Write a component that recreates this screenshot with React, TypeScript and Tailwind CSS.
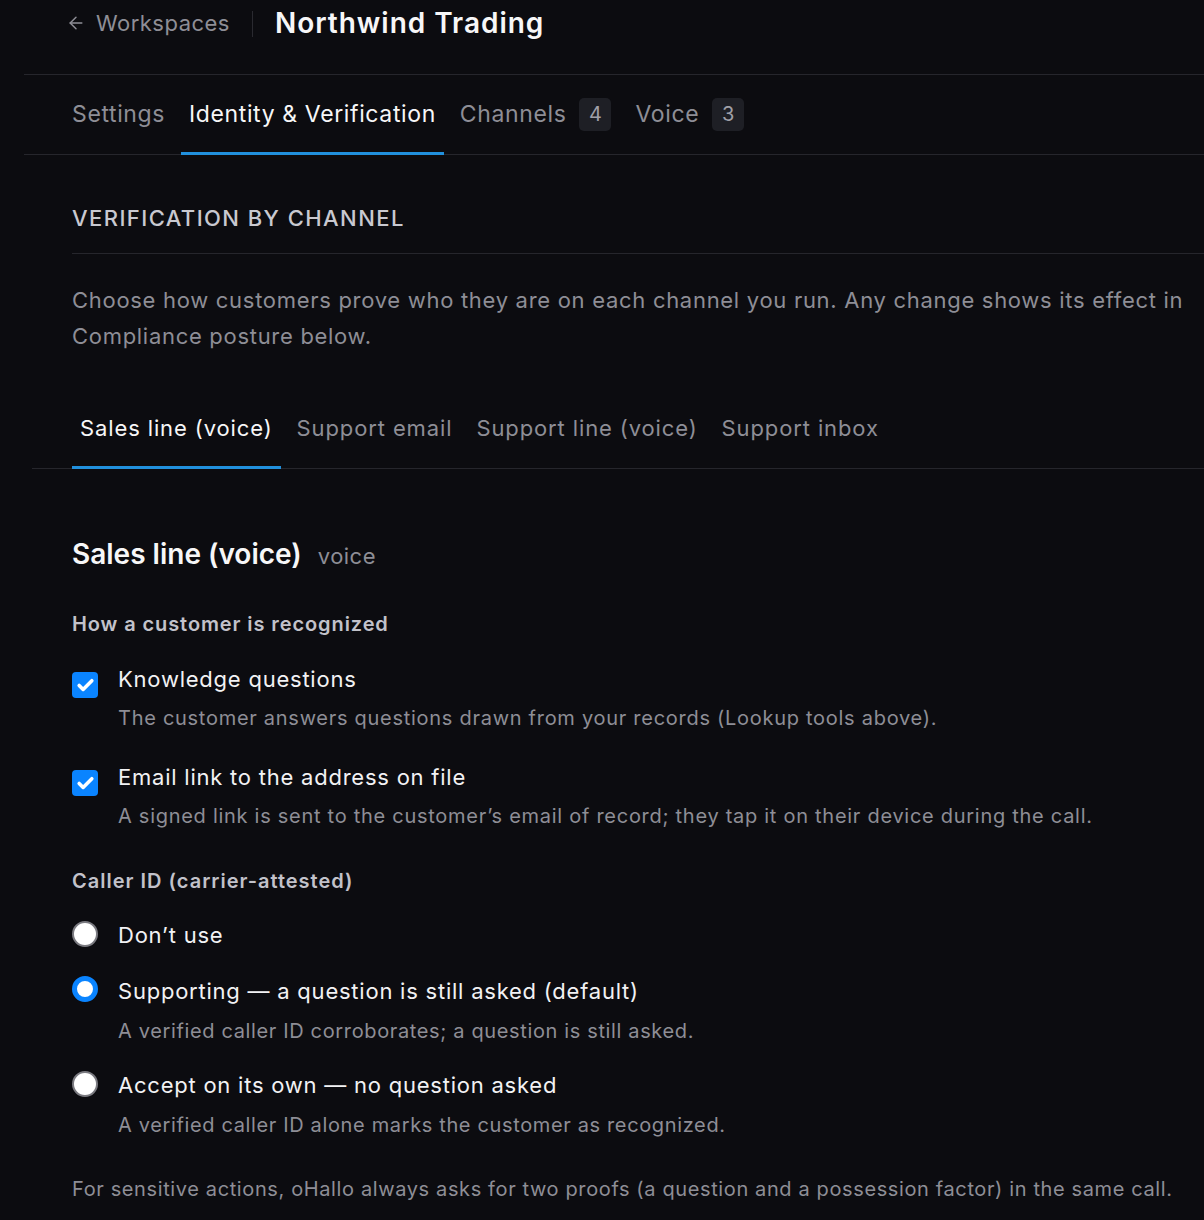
import { ArrowLeft, Check } from 'lucide-react'

const topTabs = [
  { label: 'Settings' },
  { label: 'Identity & Verification', active: true },
  { label: 'Channels', count: 4 },
  { label: 'Voice', count: 3 },
]

const channelTabs = ['Sales line (voice)', 'Support email', 'Support line (voice)', 'Support inbox']

function CheckBox() {
  return (
    <span className="mt-[9px] flex h-[26px] w-[26px] shrink-0 items-center justify-center rounded-[4px] bg-[#0a84ff]">
      <Check className="h-[19px] w-[19px] text-white" strokeWidth={4.5} />
    </span>
  )
}

function Radio({ on }: { on?: boolean }) {
  return on ? (
    <span className="mt-[1px] h-[26px] w-[26px] shrink-0 rounded-full border-[5px] border-[#0a84ff] bg-white" />
  ) : (
    <span className="mt-[2px] h-[26px] w-[26px] shrink-0 rounded-full border-2 border-[#7a7a80] bg-white" />
  )
}

function Option({ control, label, hint, first }: { control: React.ReactNode; label: string; hint?: string; first?: boolean }) {
  return (
    <div className={`flex gap-5 ${first ? 'mt-[25px]' : 'mt-[29px]'}`}>
      {control}
      <div>
        <div className="text-[22px] leading-[32px] tracking-[0.035em] text-[#f2f2f4]">{label}</div>
        {hint && <div className="mt-[9px] text-[20px] leading-[28px] tracking-[0.036em] text-[#8e8e96]">{hint}</div>}
      </div>
    </div>
  )
}

function RadioOption({ on, label, hint }: { on?: boolean; label: string; hint?: string }) {
  return (
    <div className="mt-[24px] flex gap-5">
      <Radio on={on} />
      <div>
        <div className="text-[22px] leading-[32px] tracking-[0.035em] text-[#f2f2f4]">{label}</div>
        {hint && <div className="mt-[10px] text-[20px] leading-[28px] tracking-[0.032em] text-[#8e8e96]">{hint}</div>}
      </div>
    </div>
  )
}

export default function App() {
  return (
    <div className="min-h-[1220px] overflow-hidden bg-[#0c0c10] pl-[24px] font-['Inter',sans-serif] tracking-[0.03em] text-white">
      {/* page header */}
      <header className="flex h-[75px] items-start border-b border-[#26262c] pl-[42px] pt-[5px]">
        <div className="flex h-[36px] items-center gap-[10px] text-[22px] text-[#8e8e96]">
          <ArrowLeft className="h-5 w-5" strokeWidth={1.75} />
          <span>Workspaces</span>
        </div>
        <div className="mx-[22px] mt-[6px] h-[26px] w-px bg-[#2a2a30]" />
        <h1 className="text-[28px] font-semibold leading-[36px] tracking-[0.035em] text-[#f7f7f8]">Northwind Trading</h1>
      </header>

      <nav className="flex h-[80px] gap-2 border-b border-[#26262c] pl-[40px]">
        {topTabs.map((t) => (
          <div
            key={t.label}
            className={`-mb-px flex items-center gap-[13px] border-b-[3px] px-2 pt-[1px] text-[23px] tracking-[0.027em] ${
              t.active ? 'border-[#2190dd] text-[#f7f7f8]' : 'border-transparent text-[#8e8e96]'
            }`}
          >
            {t.label}
            {t.count !== undefined && (
              <span className="flex h-[33px] w-[32px] items-center justify-center rounded-[5px] bg-[#1e1f25] text-[20px] tracking-normal text-[#a0a0a8]">
                {t.count}
              </span>
            )}
          </div>
        ))}
      </nav>

      <section className="pl-[48px]">
        <h2 className="border-b border-[#26262c] pb-[19px] pt-[47px] text-[22px] font-medium uppercase leading-[32px] tracking-[0.065em] text-[#c9c9d0]">
          Verification by channel
        </h2>
        <p className="mt-[28px] text-[22px] leading-[36px] tracking-[0.032em] text-[#8e8e96]">
          Choose how customers prove who they are on each channel you run. Any change shows its effect in Compliance
          posture below.
        </p>

        <div className="-ml-[40px] mt-[58px] flex gap-2 border-b border-[#26262c] pl-[40px]">
          {channelTabs.map((c, i) => (
            <div
              key={c}
              className={`-mb-px border-b-[3px] px-2 pb-[22px] text-[22px] leading-[32px] tracking-[0.04em] ${
                i === 0 ? 'border-[#2190dd] text-[#f7f7f8]' : 'border-transparent text-[#8e8e96]'
              }`}
            >
              {c}
            </div>
          ))}
        </div>

        <div className="mt-[67px] flex items-baseline gap-4">
          <h3 className="text-[28px] font-semibold leading-[36px] tracking-normal text-[#f7f7f8]">Sales line (voice)</h3>
          <span className="text-[22px] text-[#8e8e96]">voice</span>
        </div>

        <div className="mt-[37px] text-[20px] font-semibold leading-[28px] tracking-[0.045em] text-[#c2c2ca]">
          How a customer is recognized
        </div>
        <Option
          first
          control={<CheckBox />}
          label="Knowledge questions"
          hint="The customer answers questions drawn from your records (Lookup tools above)."
        />
        <Option
          control={<CheckBox />}
          label="Email link to the address on file"
          hint="A signed link is sent to the customer’s email of record; they tap it on their device during the call."
        />

        <div className="mt-[37px] text-[20px] font-semibold leading-[28px] tracking-[0.05em] text-[#c2c2ca]">
          Caller ID (carrier-attested)
        </div>
        <RadioOption label="Don’t use" />
        <RadioOption
          on
          label="Supporting — a question is still asked (default)"
          hint="A verified caller ID corroborates; a question is still asked."
        />
        <RadioOption
          label="Accept on its own — no question asked"
          hint="A verified caller ID alone marks the customer as recognized."
        />

        <p className="mt-[36px] text-[20px] leading-[28px] tracking-[0.031em] text-[#8e8e96]">
          For sensitive actions, oHallo always asks for two proofs (a question and a possession factor) in the same call.
        </p>
      </section>
    </div>
  )
}
